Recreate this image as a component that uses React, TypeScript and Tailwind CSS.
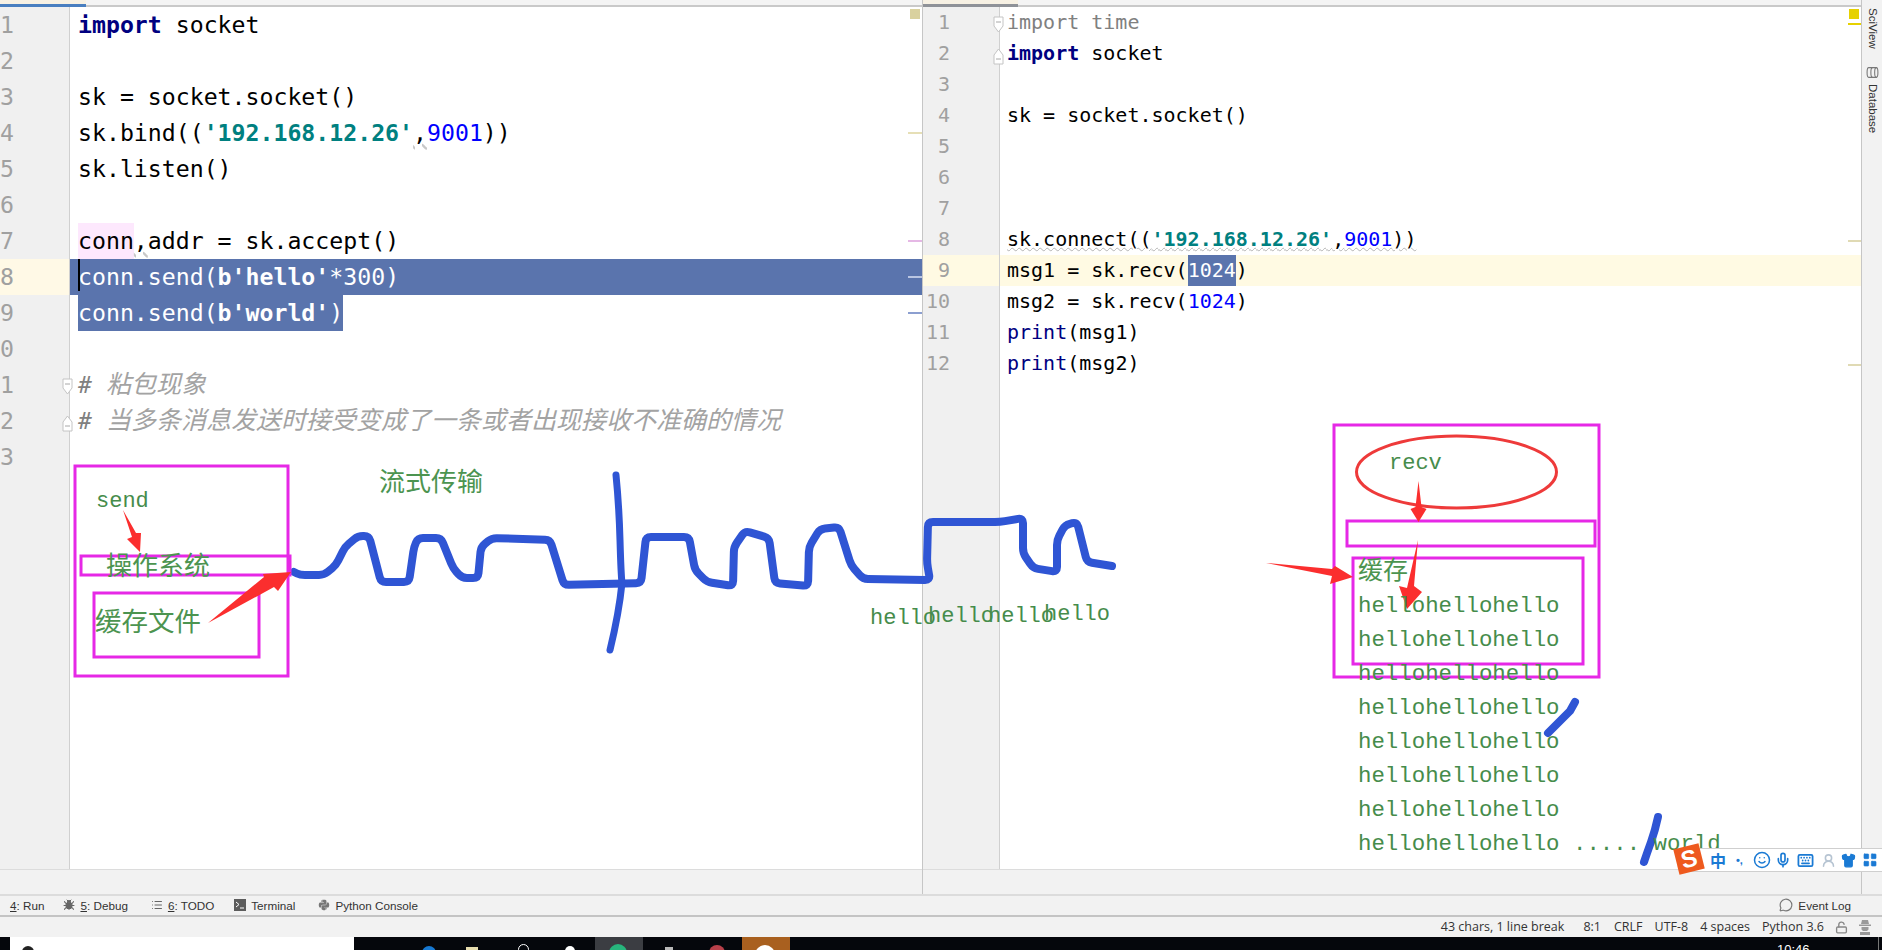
import type { ReactNode } from "react";
import { Bug, Keyboard, List, LockOpen, MessageCircle, Mic, Shirt, Smile, LayoutGrid, UserRound, Database } from "lucide-react";
import { FaPython } from "react-icons/fa";

const kw = "font-bold text-[#000080]";
const str = "font-bold text-[#008080]";
const num = "text-[#0000ff]";
const fn = "text-[#000080]";
const cjk = "text-[25px] leading-none italic font-['Noto_Sans_CJK_SC',sans-serif] font-normal text-[#a3a3a3]";

// left editor
const leftLines: { cls?: string; body?: ReactNode }[] = [
  { body: <><span className={kw}>import</span> socket</> },
  {},
  { body: "sk = socket.socket()" },
  { body: <>sk.bind((<span className={str}>'192.168.12.26'</span><span className="underline decoration-wavy decoration-[#c8c8c8]">,</span><span className={num}>9001</span>))</> },
  { body: "sk.listen()" },
  {},
  { body: <><span className="inline-block bg-[#fde8fd] h-[36px]">conn</span><span className="underline decoration-wavy decoration-[#c8c8c8]">,</span>addr = sk.accept()</> },
  { cls: "bg-[#5a74ad] text-white", body: <>conn.send(<b>b'hello'</b>*300)</> },
  { body: <span className="inline-block h-[36px] bg-[#5a74ad] text-white">conn.send(<b>b'world'</b>)</span> },
  {},
  { body: <span className="text-[#808080] italic"># <span className={cjk}>粘包现象</span></span> },
  { body: <span className="text-[#808080] italic"># <span className={cjk}>当多条消息发送时接受变成了一条或者出现接收不准确的情况</span></span> },
  {},
];

// right editor
const rightLines: { cls?: string; body?: ReactNode }[] = [
  { body: <span className="text-[#808080]">import time</span> },
  { body: <><span className={kw}>import</span> socket</> },
  {},
  { body: "sk = socket.socket()" },
  {},
  {},
  {},
  { body: <span className="underline decoration-wavy decoration-[#b4b4b4] decoration-1">sk.connect((<span className={str}>'192.168.12.26'</span>,<span className={num}>9001</span>))</span> },
  { cls: "bg-[#fffae3]", body: <>msg1 = sk.recv(<span className="inline-block h-[31px] bg-[#5a74ad] text-white">1024</span>)</> },
  { body: <>msg2 = sk.recv(<span className={num}>1024</span>)</> },
  { body: <><span className={fn}>print</span>(msg1)</> },
  { body: <><span className={fn}>print</span>(msg2)</> },
];

// pen stroke across both panes, corner points read off the picture
const wave: [number, number][] = [
  [294, 572], [300, 575], [324, 575], [336, 565], [345, 547], [358, 536], [369, 536], [381, 582], [409, 582],
  [414, 547], [418, 538], [441, 538], [453, 568], [462, 578], [478, 578], [481, 547], [492, 538], [550, 540],
  [564, 585], [641, 583], [646, 537], [689, 537], [695, 570], [707, 582], [733, 586], [734, 547], [745, 531],
  [769, 538], [775, 583], [808, 586], [809, 547], [820, 529], [839, 527], [851, 565], [863, 579], [930, 580],
  [927, 563], [928, 522], [1000, 522], [1023, 518], [1023, 553], [1033, 568], [1057, 572], [1057, 540],
  [1065, 525], [1077, 522], [1087, 562], [1112, 566],
];

function roundedPath(pts: [number, number][], r: number) {
  let d = `M${pts[0][0]} ${pts[0][1]}`;
  for (let i = 1; i < pts.length - 1; i++) {
    const [x, y] = pts[i];
    const [px, py] = pts[i - 1];
    const [nx, ny] = pts[i + 1];
    const a = Math.min(r / Math.hypot(x - px, y - py), 0.5);
    const b = Math.min(r / Math.hypot(nx - x, ny - y), 0.5);
    d += `L${x + (px - x) * a} ${y + (py - y) * a}Q${x} ${y} ${x + (nx - x) * b} ${y + (ny - y) * b}`;
  }
  const last = pts[pts.length - 1];
  return d + `L${last[0]} ${last[1]}`;
}

function FoldMark({ up }: { up?: boolean }) {
  return (
    <svg viewBox="0 0 11 18" className="w-[11px] h-[18px]" fill="#fff" stroke="#c4c4c4">
      <path d={up ? "M1 17V8l4.5-6L10 8v9z" : "M1 1v9l4.500 6L10 10V1z"} />
      <path d={up ? "M3 12h5" : "M3 6h5"} stroke="#a8a8a8" />
    </svg>
  );
}

function TerminalIcon() {
  return (
    <svg viewBox="0 0 12 12" className="w-[12px] h-[12px]">
      <rect width="12" height="12" fill="#5c5c5c" />
      <path d="M2 3l3 2.500L2 8M6 9h4" stroke="#fff" fill="none" />
    </svg>
  );
}

function Hector() {
  return (
    <svg viewBox="0 0 14 16" className="w-[14px] h-[16px]" fill="#9a9a9a">
      <path d="M4 1h6l1 4H3zM1 5.500h12V7H1zM3.500 8h7v2.500L9 12H5L3.500 10.500zM2 13h10v3H2z" />
    </svg>
  );
}

function ToolButton({ icon, label, className }: { icon?: ReactNode; label: ReactNode; className?: string }) {
  return (
    <div className={`flex items-center gap-[5px] ${className ?? ""}`}>
      {icon}
      <span>{label}</span>
    </div>
  );
}

function Annotations() {
  return (
    <div className="absolute inset-0 pointer-events-none">
      <svg className="absolute inset-0 w-[1882px] h-[950px]" viewBox="0 0 1882 950" fill="none">
        {/* pen strokes */}
        <g stroke="#2f55d4" strokeWidth="8" strokeLinecap="round" strokeLinejoin="round">
          <path d={roundedPath(wave, 5)} />
          <path d="M616 475q3 30 4 65t2 43q-3 30-12 67" strokeWidth="7" />
          <path d="M1575 702l-5 9-22 22" />
          <path d="M1658 817q-3 14-7 25t-7 20" />
        </g>
        {/* magenta boxes */}
        <g stroke="#e628e6" strokeWidth="3">
          <rect x="75" y="466" width="213" height="210" />
          <rect x="81" y="556" width="209" height="19" />
          <rect x="94" y="593" width="165" height="64" />
          <rect x="1334" y="425" width="265" height="252" />
          <rect x="1347" y="521" width="248" height="25" />
          <rect x="1353" y="558" width="230" height="106" />
        </g>
        {/* red marks */}
        <ellipse cx="1456.500" cy="472" rx="100" ry="36" stroke="#ee3a3a" strokeWidth="3" />
        <g fill="#fb2e2e">
          <path d="M123 510l13 23 5 0-1 19-13-13 5-2z" />
          <path d="M208 623l56-46-1-3 28-2-13 19-4-4z" />
          <path d="M1418.500 481l3 26 5 2-8 13-8-13 5-2z" />
          <path d="M1266 563l66 6 3-3 18 11-23 7 2-8z" />
          <path d="M1418 540l-4 46 8 6-15 17-8-23 8 2z" />
        </g>
      </svg>

      <span className="absolute left-[96px] top-[491px] text-[22px] leading-none text-[#468c4b] font-['Liberation_Mono',monospace]">send</span>
      <span className="absolute left-[106px] top-[551px] text-[26px] leading-none text-[#4c9450] font-['Noto_Sans_CJK_SC',sans-serif]">操作系统</span>
      <span className="absolute left-[95px] top-[607px] text-[26.5px] leading-none text-[#4c9450] font-['Noto_Sans_CJK_SC',sans-serif]">缓存文件</span>
      <span className="absolute left-[379px] top-[467px] text-[26px] leading-none text-[#4c9450] font-['Noto_Sans_CJK_SC',sans-serif]">流式传输</span>

      <span className="absolute left-[870px] top-[608px] text-[22px] leading-none text-[#468c4b] font-['Liberation_Mono',monospace]">hello</span>
      <span className="absolute left-[928px] top-[606px] text-[22px] leading-none text-[#468c4b] font-['Liberation_Mono',monospace]">hello</span>
      <span className="absolute left-[988px] top-[606px] text-[22px] leading-none text-[#468c4b] font-['Liberation_Mono',monospace]">hello</span>
      <span className="absolute left-[1044px] top-[604px] text-[22px] leading-none text-[#468c4b] font-['Liberation_Mono',monospace]">hello</span>

      <span className="absolute left-[1389px] top-[453px] text-[22px] leading-none text-[#468c4b] font-['Liberation_Mono',monospace]">recv</span>
      <span className="absolute left-[1358px] top-[556px] text-[25px] leading-none text-[#4c9450] font-['Noto_Sans_CJK_SC',sans-serif]">缓存</span>

      <div className="absolute left-[1358px] top-[589px] flex flex-col text-[22.4px] leading-[34px] text-[#468c4b] whitespace-pre font-['Liberation_Mono',monospace]">
        <span>hellohellohello</span>
        <span>hellohellohello</span>
        <span>hellohellohello</span>
        <span>hellohellohello</span>
        <span>hellohellohello</span>
        <span>hellohellohello</span>
        <span>hellohellohello</span>
        <span>hellohellohello ..... world</span>
      </div>
    </div>
  );
}

// sogou input method bar, floats over the lower right corner
function ImeBar() {
  return (
    <div className="absolute left-[1690px] top-[848px] w-[192px] h-[24px] bg-white border-y border-[#cfcfcf] flex items-center pl-[20px] text-[#1a7ad4]">
      <span className="absolute -left-[14px] -top-[3px] w-[26px] h-[26px] rotate-[-14deg] bg-[#ee5a1e] text-white text-[24px] leading-[26px] font-bold text-center font-['Liberation_Sans',sans-serif]">S</span>
      <span className="text-[16px] font-bold leading-none font-['Noto_Sans_CJK_SC',sans-serif]">中</span>
      <span className="ml-[10px] w-[9px] text-[11px] font-bold leading-none">•,</span>
      <Smile size={18} strokeWidth={2} className="ml-[8px]" />
      <Mic size={16} strokeWidth={2.500} className="ml-[4px]" />
      <Keyboard size={17} strokeWidth={2.500} className="ml-[6px]" />
      <UserRound size={15} strokeWidth={2.500} className="ml-[7px] text-[#b6c4d2]" />
      <Shirt size={15} fill="#1a7ad4" className="ml-[5px]" />
      <LayoutGrid size={16} fill="#1a7ad4" strokeWidth={1} className="ml-[6px]" />
    </div>
  );
}

function Taskbar() {
  return (
    <div className="h-[13px] bg-[#05070c] flex overflow-hidden relative">
      <div className="ml-[10px] w-[344px] bg-white pl-[12px] pt-[9px]">
        <div className="w-[12px] h-[12px] rounded-full bg-[#222]" />
      </div>
      <div className="ml-[68px] mt-[9px] w-[14px] h-[14px] rounded-full bg-[#1678d2]" />
      <div className="ml-[30px] mt-[10px] w-[12px] h-[12px] bg-[#e6dcae]" />
      <div className="ml-[40px] mt-[7px] w-[11px] h-[11px] rounded-full border border-white" />
      <div className="ml-[36px] mt-[9px] w-[10px] h-[10px] rounded-full bg-white" />
      <div className="ml-[20px] w-[48px] bg-[#3b3d42] pl-[14px] pt-[7px]">
        <div className="w-[18px] h-[18px] rounded-full bg-[#27b57c]" />
      </div>
      <div className="ml-[22px] mt-[10px] w-[8px] h-[8px] bg-[#b9b9b9]" />
      <div className="ml-[36px] mt-[8px] w-[16px] h-[16px] rounded-full bg-[#b8404a]" />
      <div className="ml-[17px] w-[48px] bg-[#a9601f] pl-[13px] pt-[8px]">
        <div className="w-[20px] h-[20px] rounded-full bg-white" />
      </div>
      <span className="absolute left-[1777px] top-[5px] text-[13px] leading-[16px] text-white font-['Liberation_Sans',sans-serif]">10:46</span>
      <div className="absolute left-[1878px] top-0 w-px h-[13px] bg-[#777]" />
    </div>
  );
}

export default function App() {
  return (
    <div className="relative w-[1882px] h-[950px] overflow-hidden bg-[#f2f2f2] flex flex-col font-['Liberation_Sans',sans-serif] text-[#2b2b2b]">
      <div className="flex h-[894px] shrink-0">
        {/* left pane */}
        <div className="w-[923px] flex flex-col border-r border-[#c6c6c6]">
          <div className="h-[7px] border-b-2 border-[#c9c9c9] bg-[#f4f4f4]">
            <div className="w-[86px] h-[7px] border-b-[3px] border-[#4a7fc0] bg-[#f7f1e4]" />
          </div>
          <div className="h-[863px] flex overflow-hidden bg-white border-b border-[#dcdcdc] relative font-['DejaVu_Sans_Mono',monospace] text-[23.2px] text-black">
            <div className="w-[70px] shrink-0 bg-[#f0f0f0] border-r border-[#d0d0d0] flex flex-col overflow-hidden">
              {leftLines.map((_, i) => (
                <div key={i} className={`h-[36px] shrink-0 flex justify-end w-[69px] pr-[55px] leading-[36px] text-[#a0a0a0] ${i === 7 ? "bg-[#fff9e6]" : ""}`}>
                  <span className="whitespace-nowrap">{i + 1}</span>
                </div>
              ))}
            </div>
            <div className="flex-1 flex flex-col">
              {leftLines.map((l, i) => (
                <div key={i} className={`h-[36px] shrink-0 pl-[8px] leading-[36px] whitespace-pre ${l.cls ?? ""}`}>{l.body}</div>
              ))}
            </div>
            {/* fold marks and error stripe */}
            <div className="absolute left-[62px] top-[371px]"><FoldMark /></div>
            <div className="absolute left-[62px] top-[407px]"><FoldMark up /></div>
            <div className="absolute left-[78px] top-[252px] w-[2px] h-[32px] bg-black" />
            <div className="absolute left-[908px] top-[2px] w-[14px] h-[320px] flex flex-col">
              <div className="ml-[2px] w-[10px] h-[10px] bg-[#d9d19f]" />
              <div className="mt-[113px] h-[2px] bg-[#e6dfb6]" />
              <div className="mt-[106px] h-[2px] bg-[#e5b8e5]" />
              <div className="mt-[34px] h-[2px] bg-[#b9c5e2]" />
              <div className="mt-[34px] h-[2px] bg-[#8c9fd0]" />
            </div>
          </div>
        </div>
        {/* right pane */}
        <div className="flex-1 flex flex-col border-r border-[#c6c6c6]">
          <div className="h-[7px] border-b-2 border-[#c9c9c9] bg-[#f4f4f4]">
            <div className="w-[95px] h-[7px] border-b-[3px] border-[#8f9298] bg-[#f7f1e4]" />
          </div>
          <div className="h-[863px] flex overflow-hidden bg-white border-b border-[#dcdcdc] relative font-['DejaVu_Sans_Mono',monospace] text-[20px] text-black">
            <div className="w-[77px] shrink-0 bg-[#f0f0f0] border-r border-[#d0d0d0] flex flex-col">
              {rightLines.map((_, i) => (
                <div key={i} className={`h-[31px] shrink-0 leading-[31px] pr-[49px] text-right text-[#a0a0a0] ${i === 8 ? "bg-[#fffae3]" : ""}`}>{i + 1}</div>
              ))}
            </div>
            <div className="flex-1 flex flex-col">
              {rightLines.map((l, i) => (
                <div key={i} className={`h-[31px] shrink-0 pl-[7px] leading-[31px] whitespace-pre ${l.cls ?? ""}`}>{l.body}</div>
              ))}
            </div>
            <div className="absolute left-[70px] top-[9px]"><FoldMark /></div>
            <div className="absolute left-[70px] top-[40px]"><FoldMark up /></div>
            <div className="absolute left-[925px] top-[2px] w-[14px] h-[365px] flex flex-col">
              <div className="ml-[1px] w-[10px] h-[10px] bg-[#e6d100]" />
              <div className="mt-[4px] h-[2px] bg-[#e6d100]" />
              <div className="mt-[215px] h-[2px] bg-[#e0dab4]" />
              <div className="mt-[122px] h-[2px] bg-[#e0dab4]" />
            </div>
          </div>
        </div>
        {/* side tool strip */}
        <div className="w-[20px] flex flex-col items-center pt-[8px] text-[11.500px] text-[#333]">
          <span className="[writing-mode:vertical-rl]">SciView</span>
          <Database size={13} className="mt-[17px] mb-[5px] text-[#777] rotate-90" />
          <span className="[writing-mode:vertical-rl]">Database</span>
        </div>
      </div>

      {/* tool windows bar */}
      <div className="h-[23px] shrink-0 border-t-2 border-b-2 border-t-[#dcdcdc] border-b-[#c4c4c4] flex items-center text-[11.700px] text-[#333]">
        <ToolButton className="ml-[10px]" label={<><u>4</u>: Run</>} />
        <ToolButton className="ml-[19px]" icon={<Bug size={12} fill="#666" className="text-[#666]" />} label={<><u>5</u>: Debug</>} />
        <ToolButton className="ml-[23px]" icon={<List size={12} className="text-[#666]" />} label={<><u>6</u>: TODO</>} />
        <ToolButton className="ml-[20px]" icon={<TerminalIcon />} label="Terminal" />
        <ToolButton className="ml-[23px]" icon={<FaPython size={12} className="text-[#777]" />} label="Python Console" />
        <ToolButton className="ml-auto mr-[31px] gap-[2px]" icon={<MessageCircle size={14} className="text-[#777]" />} label="Event Log" />
      </div>

      {/* status bar */}
      <div className="h-[20px] shrink-0 flex items-center justify-end pr-[10px] text-[12.500px] text-[#333] font-['Open_Sans',sans-serif] whitespace-nowrap">
        <span>43 chars, 1 line break</span>
        <span className="ml-[19px]">8:1</span>
        <span className="ml-[13px]">CRLF</span>
        <span className="ml-[12px]">UTF-8</span>
        <span className="ml-[12px]">4 spaces</span>
        <span className="ml-[12px]">Python 3.6</span>
        <LockOpen size={13} strokeWidth={2.500} className="ml-[11px] text-[#888]" />
        <div className="ml-[10px]"><Hector /></div>
      </div>

      <Taskbar />
      <Annotations />
      <ImeBar />
    </div>
  );
}
